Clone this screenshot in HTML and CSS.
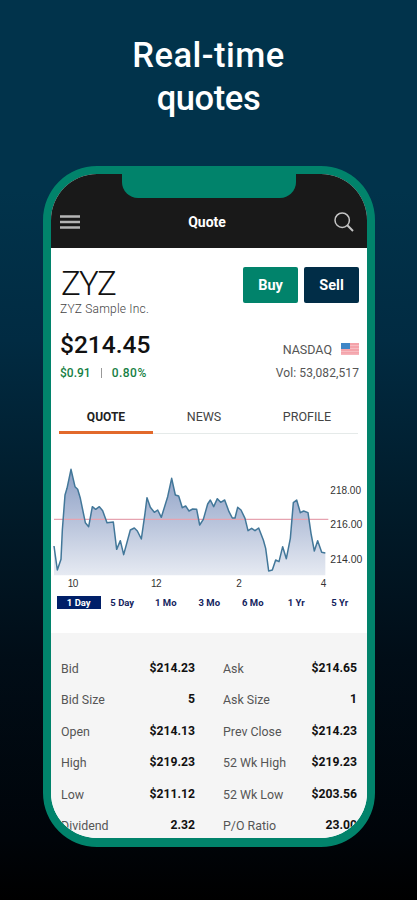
FILE: index.html
```html
<!DOCTYPE html>
<html lang="en">
<head>
<meta charset="utf-8">
<title>Real-time quotes</title>
<link rel="stylesheet" href="styles.css">
</head>
<body>
<h1 class="headline"><span class="h-one">Real-time</span><br><span class="h-two">quotes</span></h1>
<main class="phone">
  <div class="notch"></div>
  <header class="bar">
    <svg class="menu" viewBox="0 0 20 14"><path d="M0 1.5h20M0 7h20M0 12.5h20" stroke="#b5b5b5" stroke-width="2.4"/></svg>
    <span class="bar-title">Quote</span>
    <svg class="search" viewBox="0 0 20 20" fill="none" stroke="#c4c4c4"><circle cx="8.2" cy="8.2" r="7.2" stroke-width="1.5"/><path d="M13.3 13.3L19 19" stroke-width="2"/></svg>
  </header>
  <section class="summary">
    <div class="left">
      <div class="symbol"><span>ZYZ</span></div>
      <div class="company"><span>ZYZ Sample Inc.</span></div>
      <div class="price"><span>$214.45</span></div>
      <div class="change"><span class="amount">$0.91</span><i></i><span class="percent">0.80%</span></div>
    </div>
    <div class="right">
      <div class="actions"><button class="buy">Buy</button><button class="sell">Sell</button></div>
      <div class="exchange"><span>NASDAQ</span>
        <svg class="flag" viewBox="0 0 18 12"><path fill="#f4a3aa" d="M0 0h18v12H0z"/><path d="M0 2.5h18M0 5.5h18M0 8.5h18M0 11.2h18" stroke="#f8c3c7" stroke-width=".8"/><path fill="#3f86c6" d="M0 0h9v6H0z"/></svg>
      </div>
      <div class="volume"><span>Vol: 53,082,517</span></div>
    </div>
  </section>
  <nav class="tabs"><a class="on">QUOTE</a><a>NEWS</a><a>PROFILE</a></nav>
  <svg class="chart" viewBox="18 0 945 420">
    <defs><linearGradient id="fill" gradientUnits="userSpaceOnUse" x1="0" y1="60" x2="0" y2="376"><stop offset="0" stop-color="#8c9fc4"/><stop offset=".45" stop-color="#b4c0d9"/><stop offset="1" stop-color="#e6eaf2"/></linearGradient></defs>
    <path fill="url(#fill)" d="M27 376V288L37 360 48 328 52 240 60 135 66 115 78 58 90 110 98 118 106 145 121 218 131 230 142 170 152 178 163 170 173 182 186 218 205 216 215 298 226 272 236 314 256 240 268 234 277 243 289 267 300 190 306 143 316 172 328 187 338 180 349 202 368 140 380 85 391 135 401 138 412 173 422 168 432 183 443 177 455 178 464 225 475 208 488 162 496 150 506 170 517 146 527 157 539 150 552 185 562 204 570 204 578 172 588 180 600 205 609 242 620 235 630 242 641 234 655 270 662 295 671 363 682 360 692 330 702 335 713 290 724 326 736 265 745 158 755 150 766 188 776 183 789 188 798 250 808 303 818 272 830 307 841 309V376Z"/>
    <path d="M27 208H850" stroke="#e6a3b0" stroke-width="4"/>
    <path fill="none" stroke="#427799" stroke-width="4.5" stroke-linejoin="round" d="M27 288L37 360 48 328 52 240 60 135 66 115 78 58 90 110 98 118 106 145 121 218 131 230 142 170 152 178 163 170 173 182 186 218 205 216 215 298 226 272 236 314 256 240 268 234 277 243 289 267 300 190 306 143 316 172 328 187 338 180 349 202 368 140 380 85 391 135 401 138 412 173 422 168 432 183 443 177 455 178 464 225 475 208 488 162 496 150 506 170 517 146 527 157 539 150 552 185 562 204 570 204 578 172 588 180 600 205 609 242 620 235 630 242 641 234 655 270 662 295 671 363 682 360 692 330 702 335 713 290 724 326 736 265 745 158 755 150 766 188 776 183 789 188 798 250 808 303 818 272 830 307 841 309"/>
    <g class="axis">
      <text x="856" y="131" textLength="92" lengthAdjust="spacingAndGlyphs">218.00</text><text x="856" y="235" textLength="96" lengthAdjust="spacingAndGlyphs">216.00</text><text x="856" y="339" textLength="96" lengthAdjust="spacingAndGlyphs">214.00</text>
      <text x="68" y="411" textLength="32">10</text><text x="318" y="411" textLength="32">12</text><text x="574" y="411">2</text><text x="827" y="411">4</text>
    </g>
  </svg>
  <div class="ranges"><b class="on">1 Day</b><b>5 Day</b><b>1 Mo</b><b>3 Mo</b><b>6 Mo</b><b>1 Yr</b><b>5 Yr</b></div>
  <section class="stats">
    <dl><dt>Bid</dt><dd>$214.23</dd><dt>Bid Size</dt><dd>5</dd><dt>Open</dt><dd>$214.13</dd><dt>High</dt><dd>$219.23</dd><dt>Low</dt><dd>$211.12</dd><dt>Dividend</dt><dd>2.32</dd></dl>
    <dl><dt>Ask</dt><dd>$214.65</dd><dt>Ask Size</dt><dd>1</dd><dt>Prev Close</dt><dd>$214.23</dd><dt>52 Wk High</dt><dd>$219.23</dd><dt>52 Wk Low</dt><dd>$203.56</dd><dt>P/O Ratio</dt><dd>23.00</dd></dl>
  </section>
</main>
</body>
</html>
```
FILE: styles.css
```css
* { box-sizing: border-box; }
body { margin: 0; height: 900px; overflow: hidden; font-family: Roboto, sans-serif; background: linear-gradient(#01334b 0, #01334b 190px, #012b42 340px, #011c2b 500px, #010d17 660px, #000409 840px, #000 900px); }
.headline { margin: 0; padding-top: 34px; height: 166px; text-align: center; color: #fff; font-size: 34.5px; line-height: 43px; font-weight: 500; }
.h-one { letter-spacing: .5px; }
.h-two { letter-spacing: -.4px; }
.phone { position: relative; width: 332px; height: 681px; margin-left: 43px; border: solid #01836b; border-width: 8px 8.5px 9px; border-radius: 54px; overflow: hidden; background: #fff; }
.notch { position: absolute; left: 71px; top: -1px; width: 174px; height: 25px; background: #01836b; border-radius: 0 0 16px 16px; }
.bar { height: 74px; padding: 21px 13px 0 9px; background: #191919; display: flex; align-items: center; justify-content: space-between; }
.menu { width: 20px; height: 14px; }
.search { width: 20px; height: 20px; }
.bar-title { color: #fff; font-size: 14px; font-weight: 700; }
.summary { height: 152px; padding: 0 8px 0 9px; display: flex; justify-content: space-between; }
.symbol { margin-top: 18px; height: 34px; line-height: 36px; font-size: 33px; font-weight: 300; color: #111; letter-spacing: -1.8px; padding-left: 1px; }
.company { height: 18px; line-height: 19px; font-size: 12px; font-weight: 300; color: #444; letter-spacing: .2px; }
.price { margin-top: 11px; height: 28px; line-height: 31px; font-size: 24.5px; font-weight: 500; color: #111; letter-spacing: 0; }
.change { display: flex; align-items: center; height: 16px; margin-top: 8px; font-size: 12px; font-weight: 500; color: #168044; }
.change i { width: 1px; height: 10px; margin: 0 10px 0 10px; background: #999; }
.percent { letter-spacing: .5px; }
.right { text-align: right; color: #555; }
.actions { margin-top: 19px; display: flex; gap: 6px; }
.actions button { width: 55px; height: 36px; padding: 0; border: 0; border-radius: 2px; font: 700 14.5px Roboto, sans-serif; color: #fff; background: #01836b; }
.actions .sell { background: #012d47; }
.exchange { display: flex; justify-content: flex-end; align-items: center; height: 16px; margin-top: 38px; font-size: 12.5px; }
.flag { width: 18px; height: 12px; margin-left: 9px; }
.volume { height: 16px; line-height: 16px; margin-top: 8px; font-size: 12px; letter-spacing: .1px; white-space: nowrap; }
.tabs { height: 34px; margin: 0 9px 0 8px; display: grid; grid-template-columns: 94px 102px 104px; border-bottom: 1px solid #e5eae9; color: #444; font-size: 12.5px; line-height: 34px; text-align: center; }
.tabs a { height: 34px; }
.tabs .on { color: #222; font-weight: 700; font-size: 12px; border-bottom: 3px solid #e2692b; }
.chart { display: block; width: 315px; height: 140px; margin-top: 16px; }
.axis { font: 30px "Liberation Sans", sans-serif; fill: #333; }
.ranges { display: grid; grid-template-columns: repeat(7, 43.5px); margin: 5.5px 0 0 6px; height: 13px; font-size: 9.5px; line-height: 13px; color: #14245e; text-align: center; }
.ranges .on { background: #001f68; color: #fff; }
.stats { margin-top: 24px; height: 210px; padding: 20px 9px 0 10px; background: #f5f5f5; display: grid; grid-template-columns: 134px 134px; gap: 28px; }
dl { margin: 0; display: grid; grid-template-columns: auto auto; grid-auto-rows: 31.5px; align-content: start; line-height: 31.5px; font-size: 12.4px; }
dt { color: #555; white-space: nowrap; }
dd { margin: 0; text-align: right; font-size: 12.2px; font-weight: 700; color: #111; }
```
